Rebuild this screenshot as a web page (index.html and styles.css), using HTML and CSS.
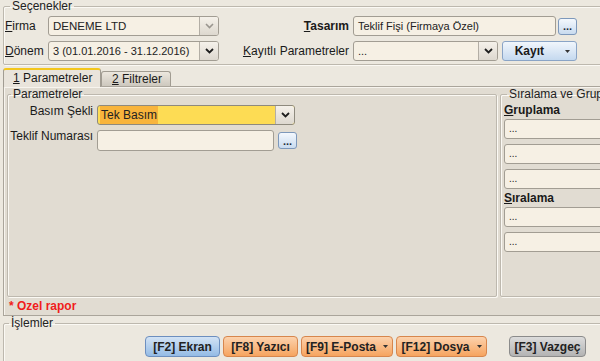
FILE: index.html
```html
<!DOCTYPE html>
<html lang="tr">

<head>
    <meta charset="UTF-8">
    <meta name="viewport" content="width=device-width, initial-scale=1.0">
    <title>Teklif Fişi</title>
    <link rel="stylesheet" href="styles.css">
</head>

<body>
    <div class="page">
        <fieldset class="group top">
            <legend>Seçenekler</legend>
            <div class="row">
                <label class="lbl-left"><u>F</u>irma</label>
                <div class="combo disabled w-left">
                    <span class="val">DENEME LTD</span>
                    <span class="arrow"><svg width="9" height="6" viewBox="0 0 9 6"><path d="M1 1l3.5 3.5L8 1" fill="none" stroke-width="1.6"/></svg></span>
                </div>
                <label class="lbl-right bold"><u>T</u>asarım</label>
                <div class="field w-tasarim">Teklif Fişi (Firmaya Özel)</div>
                <button class="dots">...</button>
            </div>
            <div class="row">
                <label class="lbl-left"><u>D</u>önem</label>
                <div class="combo w-left">
                    <span class="val">3 (01.01.2016 - 31.12.2016)</span>
                    <span class="arrow"><svg width="9" height="6" viewBox="0 0 9 6"><path d="M1 1l3.5 3.5L8 1" fill="none" stroke-width="1.8"/></svg></span>
                </div>
                <label class="lbl-right"><u>K</u>ayıtlı Parametreler</label>
                <div class="combo w-kayitli">
                    <span class="val">...</span>
                    <span class="arrow"><svg width="9" height="6" viewBox="0 0 9 6"><path d="M1 1l3.5 3.5L8 1" fill="none" stroke-width="1.8"/></svg></span>
                </div>
                <button class="kayit">Kayıt <svg width="5" height="3" viewBox="0 0 5 3"><path d="M0 0h5L2.5 3z"/></svg></button>
            </div>
        </fieldset>

        <div class="tabs">
            <div class="tab active"><u>1</u> Parametreler</div>
            <div class="tab"><u>2</u> Filtreler</div>
        </div>
        <div class="pane">
            <div class="pane-groups">
                <fieldset class="group params">
                    <legend>Parametreler</legend>
                    <div class="prow">
                        <label class="plabel">Basım Şekli</label>
                        <div class="combo yellow w-basim">
                            <span class="val"><span class="sel">Tek Basım</span></span>
                            <span class="arrow"><svg width="9" height="6" viewBox="0 0 9 6"><path d="M1 1l3.5 3.5L8 1" fill="none" stroke-width="1.8"/></svg></span>
                        </div>
                    </div>
                    <div class="prow">
                        <label class="plabel">Teklif Numarası</label>
                        <div class="field w-teklif"></div>
                        <button class="dots">...</button>
                    </div>
                </fieldset>
                <fieldset class="group sort">
                    <legend>Sıralama ve Gruplama</legend>
                    <div class="sort-title"><u>G</u>ruplama</div>
                    <div class="field w-sort">...</div>
                    <div class="field w-sort">...</div>
                    <div class="field w-sort">...</div>
                    <div class="sort-title"><u>S</u>ıralama</div>
                    <div class="field w-sort">...</div>
                    <div class="field w-sort">...</div>
                </fieldset>
            </div>
            <div class="note">* Ozel rapor</div>
        </div>

        <fieldset class="group actions">
            <legend>İşlemler</legend>
            <div class="buttons">
                <button class="btn blue">[F2] Ekran</button>
                <button class="btn orange">[F8] Yazıcı</button>
                <button class="btn orange">[F9] E-Posta <svg width="5" height="3" viewBox="0 0 5 3"><path d="M0 0h5L2.5 3z"/></svg></button>
                <button class="btn orange">[F12] Dosya <svg width="5" height="3" viewBox="0 0 5 3"><path d="M0 0h5L2.5 3z"/></svg></button>
                <button class="btn grey">[F3] Vazgeç</button>
            </div>
        </fieldset>
    </div>
</body>

</html>
```

FILE: styles.css
```css
body {
    margin: 0;
    background-color: #ece8df;
    font-family: "Liberation Sans", Arial, sans-serif;
    font-size: 12px;
    color: #1a1a1a;
    overflow: hidden;
    width: 600px;
    height: 361px;
}

.page {
    width: 612px;
}

u {
    text-decoration-thickness: 1px;
    text-underline-offset: 1px;
}

/* group boxes */
.group {
    margin: 0;
    padding: 0;
    border: 1px solid #bdb8ae;
    border-radius: 2px;
    box-shadow: inset 1px 1px 0 #fbf9f4, 1px 1px 0 #fbf9f4;
    min-width: 0;
}

.group legend {
    margin-left: 5px;
    padding: 0 2px;
    font-size: 12px;
    line-height: 12px;
    color: #222;
}

.top {
    margin-left: 3px;
    padding: 4px 0 3px 1px;
}

.row {
    display: flex;
    align-items: center;
    height: 20px;
}

.row + .row {
    margin-top: 5px;
}

.lbl-left {
    width: 43px;
}

.lbl-right {
    width: 134px;
    text-align: right;
    padding-right: 4px;
    box-sizing: border-box;
}

.bold {
    font-weight: bold;
}

/* inputs */
.field,
.combo {
    height: 20px;
    box-sizing: border-box;
    border: 1px solid #a29d93;
    border-radius: 3px;
    background-color: #f6f0e4;
    font-size: 11px;
    line-height: 18px;
    color: #222;
}

.field {
    padding-left: 4px;
    white-space: nowrap;
    overflow: hidden;
}

.combo {
    display: flex;
}

.combo .val {
    flex: 1;
    padding-left: 4px;
    white-space: nowrap;
    overflow: hidden;
}

.combo .arrow {
    width: 18px;
    border-left: 1px solid #b3aea5;
    border-radius: 0 2px 2px 0;
    background: linear-gradient(#f5f1ea, #ddd8cf);
    display: flex;
    align-items: center;
    justify-content: center;
}

.combo .arrow path {
    stroke: #1e1e1e;
}

.combo.disabled .val {
    font-size: 11.5px;
}

.combo.disabled .arrow path {
    stroke: #9a968f;
}

.w-left {
    width: 171px;
}

.w-tasarim {
    width: 203px;
}

.w-kayitli {
    width: 145px;
}

.dots {
    width: 19px;
    height: 17px;
    margin-left: 2px;
    padding: 0;
    border: 1px solid #7d98bb;
    border-radius: 3px;
    background: linear-gradient(#f4f8fd, #c9dbef);
    font-family: "Liberation Sans", Arial, sans-serif;
    font-size: 11px;
    font-weight: bold;
    line-height: 12px;
    color: #1d2a3a;
}

.kayit {
    width: 75px;
    height: 20px;
    margin-left: 4px;
    padding: 0 6px 0 0;
    border: 1px solid #8aa4c6;
    border-radius: 3px;
    background: linear-gradient(#f1f6fc, #c5d9ef);
    font-family: "Liberation Sans", Arial, sans-serif;
    font-size: 12px;
    font-weight: bold;
    color: #1a1a1a;
    display: flex;
    align-items: center;
    justify-content: flex-end;
    gap: 21px;
}

.kayit svg,
.btn svg {
    fill: #333;
}

/* tabs */
.tabs {
    display: flex;
    align-items: flex-end;
    margin: 2px 0 0 3px;
    height: 19px;
}

.tab {
    box-sizing: border-box;
    border: 1px solid #a19c92;
    border-bottom: none;
    border-radius: 3px 3px 0 0;
    font-size: 12px;
}

.tab.active {
    width: 98px;
    height: 19px;
    border-top: 2px solid #f3c61c;
    background-color: #e9e4db;
    padding: 1px 0 0 9px;
    margin-bottom: -1px;
    position: relative;
    z-index: 1;
}

.tab:not(.active) {
    width: 70px;
    height: 15px;
    padding: 0 0 0 10px;
    line-height: 15px;
    background: linear-gradient(#ece7de, #cdc8be);
}

.pane {
    margin-left: 3px;
    height: 230px;
    box-sizing: border-box;
    border: 1px solid #aaa59b;
    box-shadow: inset 1px 1px 0 #f7f4ee;
    background-color: #e1dcd2;
    padding: 1px 0 0 3px;
}

.pane-groups {
    display: flex;
    gap: 3px;
}

.params {
    width: 490px;
    height: 209px;
    box-sizing: border-box;
    padding: 5px 0 0 0;
}

.sort {
    flex: 1;
    height: 209px;
    box-sizing: border-box;
    padding: 3px 0 0 3px;
    white-space: nowrap;
}

.params legend {
    margin-left: 3px;
}

.sort legend {
    margin-left: 3px;
}

.prow {
    display: flex;
    align-items: flex-start;
    height: 21px;
    margin-bottom: 4px;
}

.plabel {
    width: 89px;
    text-align: right;
    padding-right: 4px;
    box-sizing: border-box;
    line-height: 14px;
    margin-top: -1px;
    white-space: nowrap;
}

.combo.yellow {
    background-color: #fddc54;
    border-color: #8e8a7e;
    font-size: 12px;
}

.combo.yellow .val {
    padding-left: 2px;
    line-height: 19px;
}

.sel {
    background-color: #f8b43c;
    padding: 2px 1px;
}

.w-basim {
    width: 198px;
}

.w-teklif {
    width: 177px;
    height: 21px;
}

.prow .dots {
    margin-left: 4px;
    margin-top: 2px;
}

.sort-title {
    font-weight: bold;
    font-size: 12px;
    line-height: 15px;
    margin-bottom: 1px;
}

.sort .field {
    width: 200px;
    margin-bottom: 5px;
    font-size: 10px;
}

.sort .field + .sort-title {
    margin-top: -3px;
}

.note {
    color: #f01c1c;
    font-weight: bold;
    padding: 2px 0 0 2px;
}

/* bottom actions */
.actions {
    margin: 1px 0 0 3px;
    height: 60px;
}

.buttons {
    display: flex;
    justify-content: flex-end;
    gap: 3px;
    padding: 7px 25px 0 0;
}

.btn {
    height: 21px;
    box-sizing: border-box;
    padding: 0;
    border-radius: 4px;
    font-family: "Liberation Sans", Arial, sans-serif;
    font-size: 12px;
    font-weight: bold;
    color: #222;
    display: flex;
    align-items: center;
    justify-content: center;
    gap: 7px;
}

.btn.blue {
    width: 75px;
    border: 1px solid #6d8fbf;
    background: linear-gradient(#d3e3f5, #94bbe5);
}

.btn.orange {
    border: 1px solid #d7864d;
    background: linear-gradient(#fcd2ad, #f6a45f);
}

.btn.orange:nth-child(2) {
    width: 75px;
}

.btn.orange:nth-child(3) {
    width: 92px;
}

.btn.orange:nth-child(4) {
    width: 91px;
}

.btn.grey {
    width: 77px;
    margin-left: 19px;
    border: 1px solid #8b8b8b;
    background: linear-gradient(#dcdcdc, #b3b3b3);
}
```
